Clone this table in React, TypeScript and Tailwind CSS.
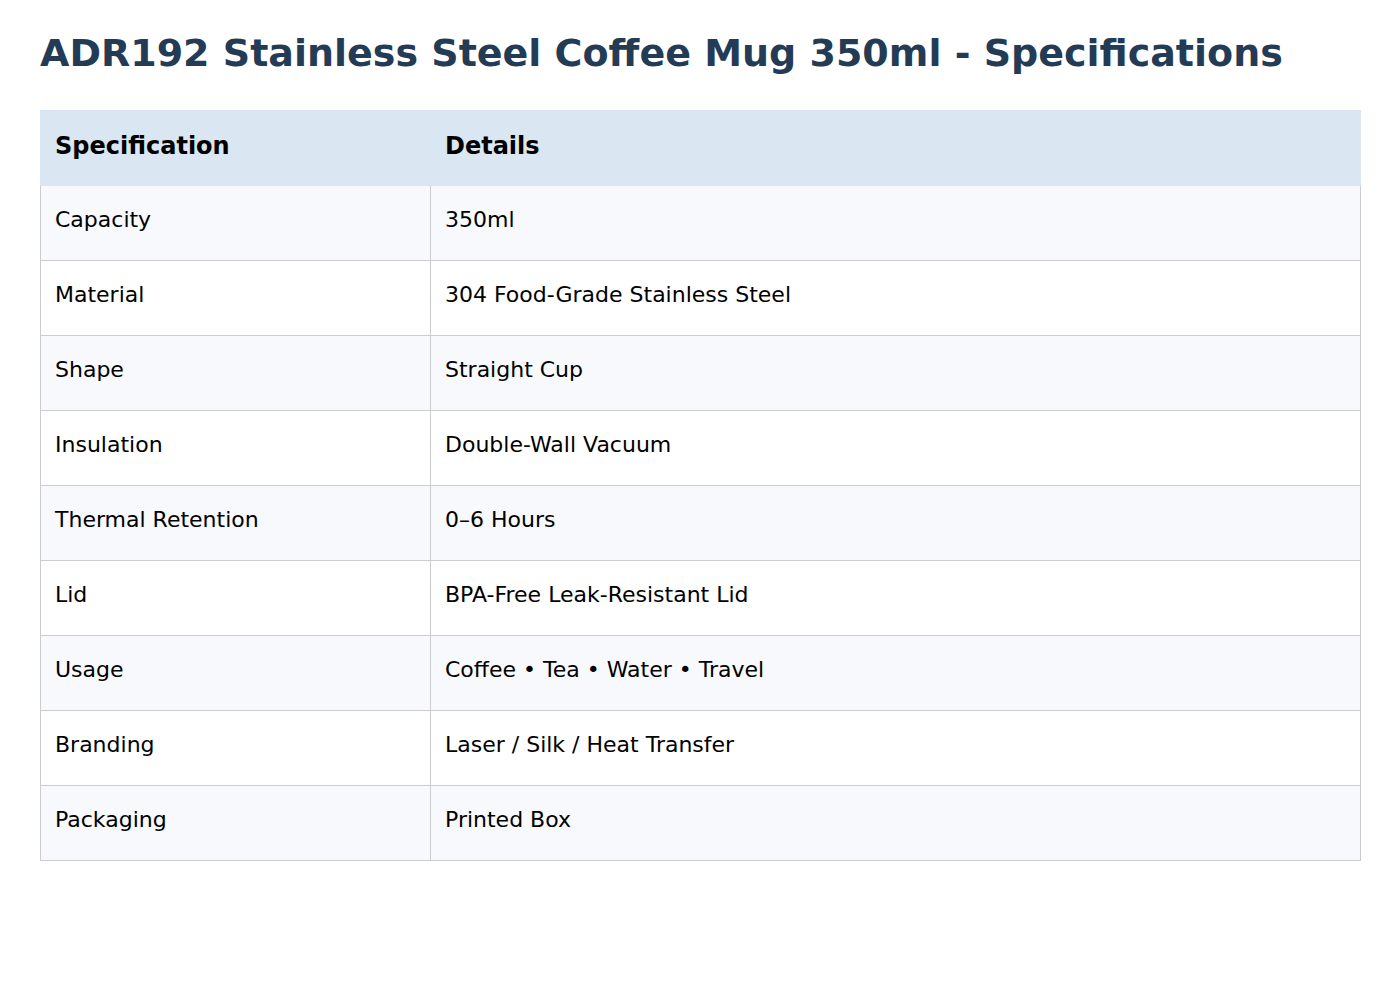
const ROWS: [string, string][] = [
  ['Capacity', '350ml'],
  ['Material', '304 Food-Grade Stainless Steel'],
  ['Shape', 'Straight Cup'],
  ['Insulation', 'Double-Wall Vacuum'],
  ['Thermal Retention', '0–6 Hours'],
  ['Lid', 'BPA-Free Leak-Resistant Lid'],
  ['Usage', 'Coffee • Tea • Water • Travel'],
  ['Branding', 'Laser / Silk / Heat Transfer'],
  ['Packaging', 'Printed Box'],
];

export default function App() {
  return (
    <div className="min-h-[1000px] bg-white p-10 font-['DejaVu_Sans',sans-serif] text-black">
      <h1 className="-mt-[17px] mb-[27px] text-[38px] font-bold leading-[60px] text-[#243b55]">
        ADR192 Stainless Steel Coffee Mug 350ml - Specifications
      </h1>
      <table className="w-[1321px] border-collapse text-[22px]">
        <thead>
          <tr className="h-[75px] bg-[#dae6f2]">
            <th className="w-[390px] border border-[#dae6f2] px-[14px] pb-[4px] text-left text-[24px] font-bold">Specification</th>
            <th className="border border-[#dae6f2] px-[14px] pb-[4px] text-left text-[24px] font-bold">Details</th>
          </tr>
        </thead>
        <tbody>
          {ROWS.map(([k, v], i) => (
            <tr key={k} className={`h-[75px] ${i % 2 === 0 ? 'bg-[#f7f9fc]' : 'bg-white'}`}>
              <td className="border border-[#cccccc] px-[14px] pb-[7px]">{k}</td>
              <td className="border border-[#cccccc] px-[14px] pb-[7px]">{v}</td>
            </tr>
          ))}
        </tbody>
      </table>
    </div>
  );
}
